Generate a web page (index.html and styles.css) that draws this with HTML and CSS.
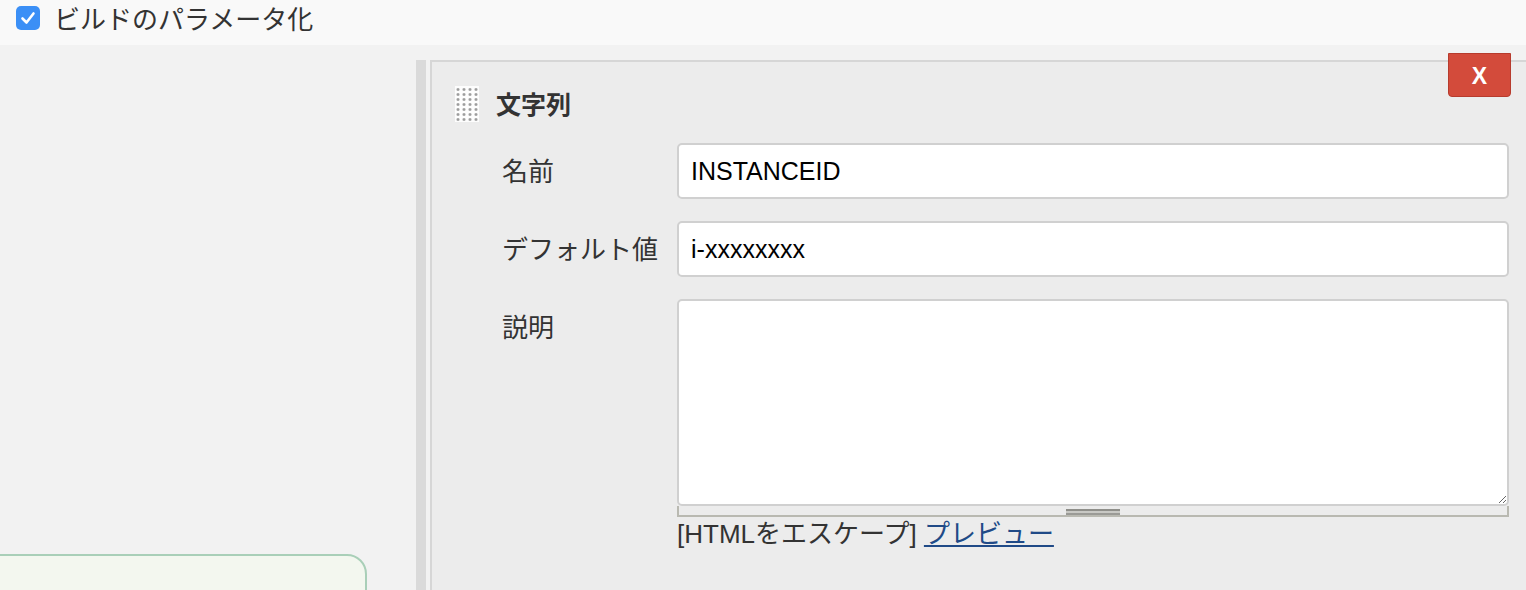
FILE: index.html
```html
<!DOCTYPE html>
<html lang="ja">
<head>
<meta charset="utf-8">
<title>ビルドのパラメータ化</title>
<link rel="stylesheet" href="styles.css">
</head>
<body>
<div class="topbar">
  <span class="checkbox">
    <svg viewBox="0 0 24 24" width="24" height="24"><path d="M6.5 12.5 L10.5 16.5 L17.5 7.5" fill="none" stroke="#fff" stroke-width="2.6" stroke-linecap="round" stroke-linejoin="round"/></svg>
  </span>
  <span class="topbar-label">ビルドのパラメータ化</span>
</div>
<div class="main">
  <div class="leftcol">
    <div class="greenbox"></div>
  </div>
  <div class="gutter"></div>
  <div class="panel">
    <button class="delete-btn">X</button>
    <div class="panel-header">
      <span class="handle"></span>
      <span class="panel-title">文字列</span>
    </div>
    <div class="form">
      <div class="label">名前</div>
      <div class="field"><input class="text-input" type="text" value="INSTANCEID"></div>
      <div class="label">デフォルト値</div>
      <div class="field"><input class="text-input" type="text" value="i-xxxxxxxx"></div>
      <div class="label">説明</div>
      <div class="field">
        <textarea class="textarea"></textarea>
        <div class="resizer"><span class="grip"></span></div>
        <div class="help">[HTMLをエスケープ] <a href="#" class="link">プレビュー</a></div>
      </div>
    </div>
  </div>
</div>
</body>
</html>
```

FILE: styles.css
```css
html, body {
  margin: 0;
  padding: 0;
  height: 100%;
  overflow: hidden;
}
body {
  background: #f2f2f2;
  font-family: "Liberation Sans", "Noto Sans CJK JP", sans-serif;
  color: #333;
}
.topbar {
  height: 45px;
  background: #f9f9f9;
  display: flex;
  align-items: flex-start;
  padding-left: 16px;
  box-sizing: border-box;
  padding-top: 6px;
}
.checkbox {
  width: 24px;
  height: 24px;
  border-radius: 5px;
  background: #3b8ff6;
  display: block;
}
.checkbox svg { display: block; }
.topbar-label {
  margin-left: 14px;
  font-family: "Noto Sans CJK JP", sans-serif;
  font-size: 26px;
  line-height: 24px;
  color: #333;
}
.main {
  display: flex;
  align-items: flex-start;
}
.leftcol {
  width: 416px;
  flex: none;
  padding-top: 509px;
}
.greenbox {
  margin-left: -2px;
  width: 365px;
  height: 120px;
  background: #f3f7ef;
  border: 2px solid #a9cfb8;
  border-top-right-radius: 20px;
}
.gutter {
  flex: none;
  width: 10px;
  height: 600px;
  margin-top: 15px;
  background: #dadada;
}
.panel {
  position: relative;
  flex: 1;
  margin-top: 15px;
  margin-left: 4px;
  height: 600px;
  background: #ececec;
  border-left: 2px solid #d6d6d6;
  border-top: 2px solid #d6d6d6;
}
.delete-btn {
  position: absolute;
  top: -9px;
  right: 15px;
  width: 63px;
  height: 44px;
  background: #d34b3b;
  border: 1px solid #b73b2d;
  border-radius: 0 0 4px 4px;
  color: #fff;
  font-family: "Liberation Sans", sans-serif;
  font-weight: bold;
  font-size: 23px;
  padding: 0;
  padding-top: 2px;
}
.panel-header {
  display: flex;
  align-items: flex-start;
  padding: 24px 0 0 23px;
}
.handle {
  width: 24px;
  height: 36px;
  background-color: #fdfdfd;
  background-image: radial-gradient(circle, #8c8c8c 0, #b0b0b0 1.1px, transparent 2px);
  background-size: 6px 5px;
  background-position: 0 1px;
}
.panel-title {
  margin-left: 17px;
  margin-top: 1px;
  font-family: "Noto Sans CJK JP", sans-serif;
  font-weight: bold;
  font-size: 25px;
  line-height: 32px;
  color: #333;
}
.form {
  display: grid;
  grid-template-columns: 175px 1fr;
  row-gap: 22px;
  padding: 21px 17px 0 70px;
}
.label {
  box-sizing: border-box;
  height: 56px;
  padding-bottom: 3px;
  display: flex;
  align-items: center;
  font-family: "Noto Sans CJK JP", sans-serif;
  font-size: 26px;
  color: #333;
}
.field {
  display: flex;
  flex-direction: column;
}
.text-input {
  box-sizing: border-box;
  width: 100%;
  height: 56px;
  margin: 0;
  padding: 0 12px;
  border: 2px solid #d0d0d0;
  border-radius: 5px;
  background: #fff;
  font-family: "Liberation Sans", sans-serif;
  font-size: 25px;
  color: #000;
  outline: none;
}
.textarea {
  box-sizing: border-box;
  width: 100%;
  height: 207px;
  margin: 0;
  border: 2px solid #d0d0d0;
  border-radius: 5px;
  background: #fff;
  display: block;
  outline: none;
}
.resizer {
  box-sizing: border-box;
  height: 11px;
  border: 2px solid #b9b9b1;
  border-top: none;
  display: flex;
  justify-content: center;
  align-items: flex-start;
  padding-top: 3px;
}
.grip {
  width: 54px;
  height: 2px;
  border-top: 2px solid #8f8f8a;
  border-bottom: 2px solid #9a9a96;
  background: #c8c8c4;
}
.help {
  font-size: 26px;
  line-height: 34px;
  color: #333;
  font-family: "Liberation Sans", "Noto Sans CJK JP", sans-serif;
}
.link {
  color: #204a87;
  text-decoration: underline;
}
```
